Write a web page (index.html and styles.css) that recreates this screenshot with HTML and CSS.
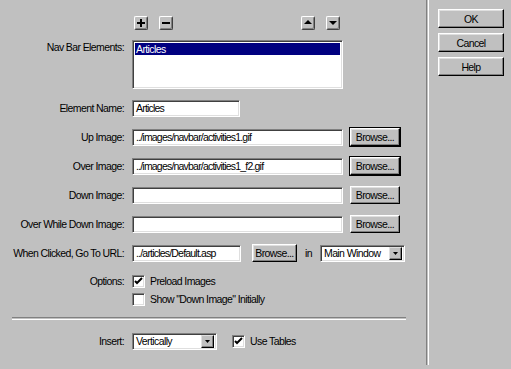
FILE: index.html
```html
<!DOCTYPE html>
<html lang="en">
<head>
    <meta charset="UTF-8">
    <title>Insert Navigation Bar</title>
    <link rel="stylesheet" href="styles.css">
</head>
<body>
    <div class="dialog">
        <div class="main">
            <div class="row toolbar-row">
                <div class="label"></div>
                <div class="toolbar">
                    <div class="tool-group">
                        <button class="tool"><svg width="8" height="8" viewBox="0 0 8 8"><path d="M3 0h2v3h3v2H5v3H3V5H0V3h3z" fill="#000"/></svg></button>
                        <button class="tool"><svg width="8" height="8" viewBox="0 0 8 8"><path d="M0 3h8v2H0z" fill="#000"/></svg></button>
                    </div>
                    <div class="tool-group">
                        <button class="tool"><svg width="8" height="8" viewBox="0 0 8 8"><path d="M4 1L8 5H0z" fill="#000"/></svg></button>
                        <button class="tool"><svg width="8" height="8" viewBox="0 0 8 8"><path d="M0 2h8L4 6z" fill="#000"/></svg></button>
                    </div>
                </div>
            </div>

            <div class="row list-row">
                <div class="label">Nav Bar Elements:</div>
                <div class="listbox">
                    <div class="list-item selected">Articles</div>
                </div>
            </div>

            <div class="row name-row">
                <div class="label">Element Name:</div>
                <div class="field short">Articles</div>
            </div>

            <div class="row">
                <div class="label">Up Image:</div>
                <div class="field wide">../images/navbar/activities1.gif</div>
                <button class="btn browse default">Browse...</button>
            </div>
            <div class="row">
                <div class="label">Over Image:</div>
                <div class="field wide">../images/navbar/activities1_f2.gif</div>
                <button class="btn browse default">Browse...</button>
            </div>
            <div class="row">
                <div class="label">Down Image:</div>
                <div class="field wide"></div>
                <button class="btn browse">Browse...</button>
            </div>
            <div class="row">
                <div class="label">Over While Down Image:</div>
                <div class="field wide"></div>
                <button class="btn browse">Browse...</button>
            </div>
            <div class="row">
                <div class="label">When Clicked, Go To URL:</div>
                <div class="field url">../articles/Default.asp</div>
                <button class="btn browse small">Browse...</button>
                <span class="in">in</span>
                <div class="select target">
                    <span class="select-text">Main Window</span>
                    <span class="drop"><svg width="5" height="3" viewBox="0 0 5 3"><path d="M0 0h5L2.5 3z" fill="#000"/></svg></span>
                </div>
            </div>

            <div class="row check-row first">
                <div class="label">Options:</div>
                <span class="checkbox"><svg width="9" height="9" viewBox="0 0 9 9"><path d="M1 4l2 2 5-5" stroke="#000" stroke-width="2" fill="none"/></svg></span>
                <span class="check-text">Preload Images</span>
            </div>
            <div class="row check-row">
                <div class="label"></div>
                <span class="checkbox"></span>
                <span class="check-text">Show "Down Image" Initially</span>
            </div>

            <div class="hsep"></div>

            <div class="row insert-row">
                <div class="label">Insert:</div>
                <div class="select insert">
                    <span class="select-text">Vertically</span>
                    <span class="drop"><svg width="5" height="3" viewBox="0 0 5 3"><path d="M0 0h5L2.5 3z" fill="#000"/></svg></span>
                </div>
                <span class="checkbox tables"><svg width="9" height="9" viewBox="0 0 9 9"><path d="M1 4l2 2 5-5" stroke="#000" stroke-width="2" fill="none"/></svg></span>
                <span class="check-text">Use Tables</span>
            </div>
        </div>

        <div class="vsep"></div>

        <div class="side">
            <button class="btn side-btn">OK</button>
            <button class="btn side-btn">Cancel</button>
            <button class="btn side-btn">Help</button>
        </div>
    </div>
</body>
</html>
```

FILE: styles.css
```css
body {
    margin: 0;
    background-color: #c0c0c0;
    font-family: "Liberation Sans", Arial, sans-serif;
    font-size: 10.5px;
    letter-spacing: -0.6px;
    color: #000;
}
.dialog {
    display: flex;
    width: 511px;
    height: 369px;
}
.main {
    width: 426px;
}
.row {
    display: flex;
    align-items: center;
    height: 18px;
    margin-top: 11px;
    white-space: nowrap;
}
.label {
    width: 124px;
    margin-right: 8px;
    text-align: right;
    flex-shrink: 0;
}
.toolbar-row {
    margin-top: 16px;
    height: 14px;
}
.toolbar {
    width: 206px;
    display: flex;
    justify-content: space-between;
    padding-left: 2px;
}
.tool-group {
    display: flex;
    gap: 11px;
}
.tool {
    width: 14px;
    height: 14px;
    padding: 0;
    display: flex;
    align-items: center;
    justify-content: center;
    background-color: #c0c0c0;
    border: 1px solid;
    border-color: #fff #404040 #404040 #fff;
    border-radius: 2px;
    box-shadow: inset -1px -1px #808080;
}
.list-row {
    height: 49px;
    margin-top: 10px;
    align-items: flex-start;
}
.list-row .label {
    margin-top: 1px;
}
.listbox, .field, .select {
    box-sizing: border-box;
    background-color: #fff;
    border: 1px solid;
    border-color: #808080 #fff #fff #808080;
    box-shadow: inset 1px 1px #404040, inset -1px -1px #dfdfdf;
}
.listbox {
    width: 211px;
    height: 49px;
    padding: 2px;
}
.list-item {
    height: 12px;
    line-height: 12px;
    padding-left: 1px;
}
.selected {
    background-color: #000080;
    color: #fff;
}
.name-row {
    margin-top: 10px;
}
.field {
    height: 17px;
    line-height: 15px;
    padding-left: 3px;
    overflow: hidden;
    letter-spacing: -0.8px;
}
.short {
    width: 108px;
}
.wide {
    width: 211px;
}
.url {
    width: 109px;
}
.btn {
    box-sizing: border-box;
    font-family: "Liberation Sans", Arial, sans-serif;
    font-size: 10.5px;
    letter-spacing: -0.6px;
    color: #000;
    padding: 0;
    background-color: #c0c0c0;
    border: 1px solid;
    border-color: #fff #000 #000 #fff;
    box-shadow: inset -1px -1px #808080, inset 1px 1px #dfdfdf;
}
.browse {
    width: 50px;
    height: 18px;
    margin-left: 7px;
}
.default {
    outline: 1px solid #000;
}
.small {
    width: 45px;
    margin-left: 11px;
}
.in {
    margin-left: 8px;
    margin-right: 8px;
}
.select {
    height: 17px;
    display: flex;
    align-items: center;
    justify-content: space-between;
    padding: 0 2px 0 3px;
}
.target {
    width: 85px;
}
.insert {
    width: 85px;
}
.drop {
    box-sizing: border-box;
    width: 13px;
    height: 13px;
    display: flex;
    align-items: center;
    justify-content: center;
    background-color: #c0c0c0;
    border: 1px solid;
    border-color: #dfdfdf #000 #000 #dfdfdf;
    box-shadow: inset -1px -1px #808080;
}
.check-row {
    height: 14px;
    margin-top: 12px;
}
.check-row + .check-row {
    margin-top: 4px;
}
.checkbox {
    box-sizing: border-box;
    width: 13px;
    height: 13px;
    display: flex;
    align-items: center;
    justify-content: center;
    background-color: #fff;
    border: 1px solid;
    border-color: #808080 #fff #fff #808080;
    box-shadow: inset 1px 1px #404040, inset -1px -1px #dfdfdf;
}
.check-text {
    margin-left: 5px;
}
.tables {
    margin-left: 15px;
}
.hsep {
    margin: 11px 0 0 12px;
    width: 394px;
    height: 1px;
    border-top: 1px solid #808080;
    border-bottom: 1px solid #fff;
}
.insert-row {
    margin-top: 12px;
}
.vsep {
    width: 1px;
    height: 365px;
    border-left: 1px solid #808080;
    border-right: 1px solid #fff;
}
.side {
    display: flex;
    flex-direction: column;
    gap: 5px;
    padding: 9px 0 0 9px;
}
.side-btn {
    width: 66px;
    height: 19px;
}
```
